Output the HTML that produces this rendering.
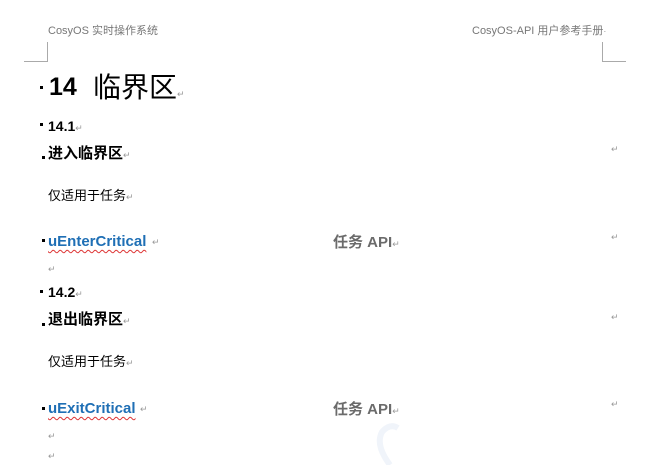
<!DOCTYPE html>
<html><head><meta charset="utf-8"><style>
body{margin:0;width:660px;height:465px;background:#fff;position:relative;overflow:hidden;font-family:"Liberation Sans","Noto Sans CJK SC",sans-serif}
.a{position:absolute;white-space:nowrap;line-height:1}
.r{color:#999;font-size:9px;font-weight:normal}
.h{color:#777;font-size:11px}
.sq{position:absolute;width:3px;height:3px;background:#000}
.ln{position:absolute;background:#aaa}
.blue{color:#1f6fb5;font-weight:bold;font-size:15px;text-decoration:underline wavy #d33;text-decoration-thickness:1px;text-underline-offset:3px}
.gray{color:#6b6b6b;font-weight:bold;font-size:15px}
</style></head><body>
<div class="a h" style="left:48px;top:26px">CosyOS 实时操作系统</div>
<div class="a h" style="left:472px;top:26px">CosyOS-API 用户参考手册<span class="r">·</span></div>
<div class="ln" style="left:47px;top:42px;width:1px;height:20px"></div>
<div class="ln" style="left:24px;top:61px;width:24px;height:1px"></div>
<div class="ln" style="left:602px;top:42px;width:1px;height:20px"></div>
<div class="ln" style="left:602px;top:61px;width:24px;height:1px"></div>

<div class="sq" style="left:40px;top:86px"></div>
<div class="a" style="left:49px;top:75px;font-size:25px;font-weight:bold">14</div>
<div class="a" style="left:93px;top:74px;font-size:28px">临界区<span class="r">↵</span></div>

<div class="sq" style="left:40px;top:123px"></div>
<div class="a" style="left:48px;top:119px;font-size:14px;font-weight:bold">14.1<span class="r">↵</span></div>
<div class="sq" style="left:42px;top:156px"></div>
<div class="a" style="left:48px;top:146px;font-size:15px;font-weight:bold">进入临界区<span class="r">↵</span></div>
<div class="a r" style="left:611px;top:145px">↵</div>
<div class="a" style="left:48px;top:189px;font-size:13px">仅适用于任务<span class="r">↵</span></div>

<div class="sq" style="left:42px;top:239px"></div>
<div class="a blue" style="left:48px;top:234px">uEnterCritical</div><div class="a r" style="left:152px;top:238px">↵</div>
<div class="a gray" style="left:333px;top:235px">任务 API<span class="r">↵</span></div>
<div class="a r" style="left:611px;top:233px">↵</div>
<div class="a r" style="left:48px;top:265px">↵</div>

<div class="sq" style="left:40px;top:290px"></div>
<div class="a" style="left:48px;top:285px;font-size:14px;font-weight:bold">14.2<span class="r">↵</span></div>
<div class="sq" style="left:42px;top:323px"></div>
<div class="a" style="left:48px;top:312px;font-size:15px;font-weight:bold">退出临界区<span class="r">↵</span></div>
<div class="a r" style="left:611px;top:313px">↵</div>
<div class="a" style="left:48px;top:355px;font-size:13px">仅适用于任务<span class="r">↵</span></div>

<div class="sq" style="left:42px;top:407px"></div>
<div class="a blue" style="left:48px;top:401px">uExitCritical</div><div class="a r" style="left:140px;top:405px">↵</div>
<div class="a gray" style="left:333px;top:402px">任务 API<span class="r">↵</span></div>
<div class="a r" style="left:611px;top:400px">↵</div>
<div class="a r" style="left:48px;top:432px">↵</div>
<div class="a r" style="left:48px;top:452px">↵</div>
<svg class="a" style="left:340px;top:420px" width="100" height="45"><path d="M50 45 Q 35 25 42 12 Q 50 3 58 8" stroke="#f0f4fa" stroke-width="6" fill="none"/></svg>
</body></html>
